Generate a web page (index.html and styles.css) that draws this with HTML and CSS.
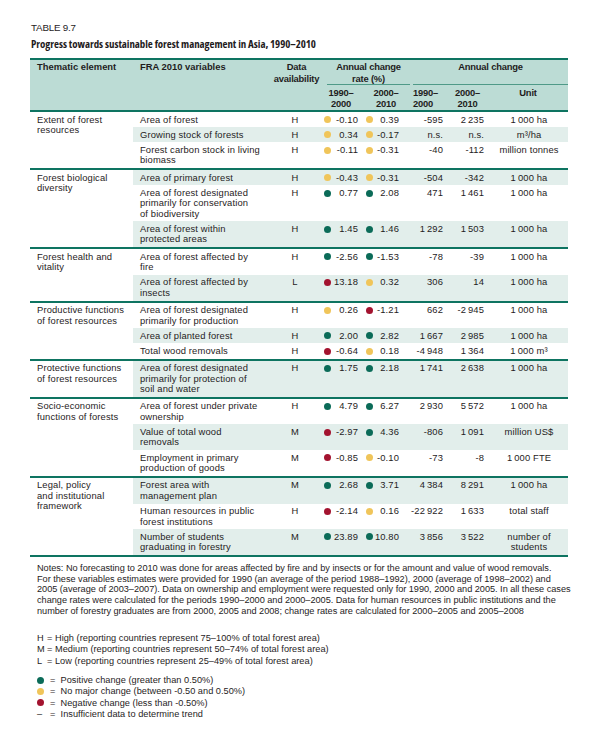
FILE: index.html
```html
<!DOCTYPE html>
<html>
<head>
<meta charset="utf-8">
<title>Table 9.7</title>
<link rel="stylesheet" href="styles.css">
</head>
<body>
<div class="page">
  <div class="label">TABLE 9.7</div>
  <div class="title">Progress towards sustainable forest management in Asia, 1990–2010</div>
  <table class="sfm">
    <colgroup>
      <col class="c1"><col class="c2"><col class="c3"><col class="c4"><col class="c5"><col class="c6"><col class="c7"><col class="c8">
    </colgroup>
    <thead>
      <tr class="h1">
        <th rowspan="2" class="tl">Thematic element</th>
        <th rowspan="2" class="tl">FRA 2010 variables</th>
        <th rowspan="2" class="tc">Data<br>availability</th>
        <th colspan="2" class="grp"><div class="grp-in rate">Annual change<br>rate (%)</div></th>
        <th colspan="3" class="grp"><div class="grp-in ann">Annual change</div></th>
      </tr>
      <tr class="h2">
        <th class="tc">1990–<br>2000</th>
        <th class="tc">2000–<br>2010</th>
        <th class="tl p2">1990–<br>2000</th>
        <th class="tc">2000–<br>2010</th>
        <th class="tc">Unit</th>
      </tr>
    </thead>
    <tbody>
      <tr>
        <td rowspan="3" class="theme">Extent of forest<br>resources</td>
        <td class="var">Area of forest</td><td class="av">H</td>
        <td class="r1"><span class="rt"><i class="dot y"></i>-0.10</span></td>
        <td class="r2"><span class="rt"><i class="dot y"></i>0.39</span></td>
        <td class="n1">-595</td><td class="n2">2&#8201;235</td><td class="unit">1&#8201;000 ha</td>
      </tr>
      <tr class="s">
        <td class="var">Growing stock of forests</td><td class="av">H</td>
        <td class="r1"><span class="rt"><i class="dot y"></i>0.34</span></td>
        <td class="r2"><span class="rt"><i class="dot y"></i>-0.17</span></td>
        <td class="n1">n.s.</td><td class="n2">n.s.</td><td class="unit">m³/ha</td>
      </tr>
      <tr>
        <td class="var">Forest carbon stock in living<br>biomass</td><td class="av">H</td>
        <td class="r1"><span class="rt"><i class="dot y"></i>-0.11</span></td>
        <td class="r2"><span class="rt"><i class="dot y"></i>-0.31</span></td>
        <td class="n1">-40</td><td class="n2">-112</td><td class="unit">million tonnes</td>
      </tr>
    </tbody>
    <tbody>
      <tr class="s">
        <td rowspan="3" class="theme">Forest biological<br>diversity</td>
        <td class="var">Area of primary forest</td><td class="av">H</td>
        <td class="r1"><span class="rt"><i class="dot y"></i>-0.43</span></td>
        <td class="r2"><span class="rt"><i class="dot y"></i>-0.31</span></td>
        <td class="n1">-504</td><td class="n2">-342</td><td class="unit">1&#8201;000 ha</td>
      </tr>
      <tr>
        <td class="var">Area of forest designated<br>primarily for conservation<br>of biodiversity</td><td class="av">H</td>
        <td class="r1"><span class="rt"><i class="dot g"></i>0.77</span></td>
        <td class="r2"><span class="rt"><i class="dot g"></i>2.08</span></td>
        <td class="n1">471</td><td class="n2">1&#8201;461</td><td class="unit">1&#8201;000 ha</td>
      </tr>
      <tr class="s">
        <td class="var">Area of forest within<br>protected areas</td><td class="av">H</td>
        <td class="r1"><span class="rt"><i class="dot g"></i>1.45</span></td>
        <td class="r2"><span class="rt"><i class="dot g"></i>1.46</span></td>
        <td class="n1">1&#8201;292</td><td class="n2">1&#8201;503</td><td class="unit">1&#8201;000 ha</td>
      </tr>
    </tbody>
    <tbody>
      <tr>
        <td rowspan="2" class="theme">Forest health and<br>vitality</td>
        <td class="var">Area of forest affected by<br>fire</td><td class="av">H</td>
        <td class="r1"><span class="rt"><i class="dot g"></i>-2.56</span></td>
        <td class="r2"><span class="rt"><i class="dot g"></i>-1.53</span></td>
        <td class="n1">-78</td><td class="n2">-39</td><td class="unit">1&#8201;000 ha</td>
      </tr>
      <tr class="s">
        <td class="var">Area of forest affected by<br>insects</td><td class="av">L</td>
        <td class="r1"><span class="rt"><i class="dot r"></i>13.18</span></td>
        <td class="r2"><span class="rt"><i class="dot y"></i>0.32</span></td>
        <td class="n1">306</td><td class="n2">14</td><td class="unit">1&#8201;000 ha</td>
      </tr>
    </tbody>
    <tbody>
      <tr>
        <td rowspan="3" class="theme">Productive functions<br>of forest resources</td>
        <td class="var">Area of forest designated<br>primarily for production</td><td class="av">H</td>
        <td class="r1"><span class="rt"><i class="dot y"></i>0.26</span></td>
        <td class="r2"><span class="rt"><i class="dot r"></i>-1.21</span></td>
        <td class="n1">662</td><td class="n2">-2&#8201;945</td><td class="unit">1&#8201;000 ha</td>
      </tr>
      <tr class="s">
        <td class="var">Area of planted forest</td><td class="av">H</td>
        <td class="r1"><span class="rt"><i class="dot g"></i>2.00</span></td>
        <td class="r2"><span class="rt"><i class="dot g"></i>2.82</span></td>
        <td class="n1">1&#8201;667</td><td class="n2">2&#8201;985</td><td class="unit">1&#8201;000 ha</td>
      </tr>
      <tr>
        <td class="var">Total wood removals</td><td class="av">H</td>
        <td class="r1"><span class="rt"><i class="dot r"></i>-0.64</span></td>
        <td class="r2"><span class="rt"><i class="dot y"></i>0.18</span></td>
        <td class="n1">-4&#8201;948</td><td class="n2">1&#8201;364</td><td class="unit">1&#8201;000 m³</td>
      </tr>
    </tbody>
    <tbody>
      <tr class="s">
        <td class="theme">Protective functions<br>of forest resources</td>
        <td class="var">Area of forest designated<br>primarily for protection of<br>soil and water</td><td class="av">H</td>
        <td class="r1"><span class="rt"><i class="dot g"></i>1.75</span></td>
        <td class="r2"><span class="rt"><i class="dot g"></i>2.18</span></td>
        <td class="n1">1&#8201;741</td><td class="n2">2&#8201;638</td><td class="unit">1&#8201;000 ha</td>
      </tr>
    </tbody>
    <tbody>
      <tr>
        <td rowspan="3" class="theme">Socio-economic<br>functions of forests</td>
        <td class="var">Area of forest under private<br>ownership</td><td class="av">H</td>
        <td class="r1"><span class="rt"><i class="dot g"></i>4.79</span></td>
        <td class="r2"><span class="rt"><i class="dot g"></i>6.27</span></td>
        <td class="n1">2&#8201;930</td><td class="n2">5&#8201;572</td><td class="unit">1&#8201;000 ha</td>
      </tr>
      <tr class="s">
        <td class="var">Value of total wood<br>removals</td><td class="av">M</td>
        <td class="r1"><span class="rt"><i class="dot r"></i>-2.97</span></td>
        <td class="r2"><span class="rt"><i class="dot g"></i>4.36</span></td>
        <td class="n1">-806</td><td class="n2">1&#8201;091</td><td class="unit">million US$</td>
      </tr>
      <tr>
        <td class="var">Employment in primary<br>production of goods</td><td class="av">M</td>
        <td class="r1"><span class="rt"><i class="dot r"></i>-0.85</span></td>
        <td class="r2"><span class="rt"><i class="dot y"></i>-0.10</span></td>
        <td class="n1">-73</td><td class="n2">-8</td><td class="unit">1&#8201;000 FTE</td>
      </tr>
    </tbody>
    <tbody>
      <tr class="s">
        <td rowspan="3" class="theme">Legal, policy<br>and institutional<br>framework</td>
        <td class="var">Forest area with<br>management plan</td><td class="av">M</td>
        <td class="r1"><span class="rt"><i class="dot g"></i>2.68</span></td>
        <td class="r2"><span class="rt"><i class="dot g"></i>3.71</span></td>
        <td class="n1">4&#8201;384</td><td class="n2">8&#8201;291</td><td class="unit">1&#8201;000 ha</td>
      </tr>
      <tr>
        <td class="var">Human resources in public<br>forest institutions</td><td class="av">H</td>
        <td class="r1"><span class="rt"><i class="dot r"></i>-2.14</span></td>
        <td class="r2"><span class="rt"><i class="dot y"></i>0.16</span></td>
        <td class="n1">-22&#8201;922</td><td class="n2">1&#8201;633</td><td class="unit">total staff</td>
      </tr>
      <tr class="s">
        <td class="var">Number of students<br>graduating in forestry</td><td class="av">M</td>
        <td class="r1"><span class="rt"><i class="dot g"></i>23.89</span></td>
        <td class="r2"><span class="rt"><i class="dot g"></i>10.80</span></td>
        <td class="n1">3&#8201;856</td><td class="n2">3&#8201;522</td><td class="unit">number of<br>students</td>
      </tr>
    </tbody>
  </table>

  <p class="notes">Notes: No forecasting to 2010 was done for areas affected by fire and by insects or for the amount and value of wood removals.<br>For these variables estimates were provided for 1990 (an average of the period 1988–1992), 2000 (average of 1998–2002) and<br>2005 (average of 2003–2007). Data on ownership and employment were requested only for 1990, 2000 and 2005. In all these cases<br>change rates were calculated for the periods 1990–2000 and 2000–2005. Data for human resources in public institutions and the<br>number of forestry graduates are from 2000, 2005 and 2008; change rates are calculated for 2000–2005 and 2005–2008</p>

  <ul class="legend">
    <li><span class="key">H</span>= High (reporting countries represent 75–100% of total forest area)</li>
    <li><span class="key">M</span>= Medium (reporting countries represent 50–74% of total forest area)</li>
    <li><span class="key">L</span>= Low (reporting countries represent 25–49% of total forest area)</li>
  </ul>
  <ul class="legend dots">
    <li><span class="key"><i class="dot g"></i></span>=&nbsp; Positive change (greater than 0.50%)</li>
    <li><span class="key"><i class="dot y"></i></span>=&nbsp; No major change (between -0.50 and 0.50%)</li>
    <li><span class="key"><i class="dot r"></i></span>=&nbsp; Negative change (less than -0.50%)</li>
    <li><span class="key">–</span>=&nbsp; Insufficient data to determine trend</li>
  </ul>
</div>
</body>
</html>
```

FILE: styles.css
```css
* { box-sizing: border-box; }
html, body { margin: 0; padding: 0; background: #fff; }
body {
  font-family: "Liberation Sans", Arial, sans-serif;
  color: #1f1c1d;
}
.page {
  padding: 22px 0 0 30px;
  width: 600px;
}
.label {
  font-size: 9.8px;
  line-height: 12px;
  letter-spacing: -0.2px;
  padding-left: 1px;
}
.title {
  font-family: "Open Sans", "Liberation Sans", sans-serif;
  font-size: 10.9px;
  line-height: 13px;
  font-weight: 700;
  font-stretch: 80%;
  letter-spacing: -0.05px;
  margin-top: 3px;
  padding-left: 1px;
}
.sfm {
  margin-top: 8px;
  width: 538px;
  table-layout: fixed;
  border-collapse: collapse;
  font-size: 9.4px;
  line-height: 10.5px;
  letter-spacing: 0.13px;
}
.c1 { width: 103px; }
.c2 { width: 139px; }
.c3 { width: 49px; }
.c4 { width: 40px; }
.c5 { width: 50px; }
.c6 { width: 36px; }
.c7 { width: 41px; }
.c8 { width: 80px; }

.sfm thead {
  background: #bcdcd5;
  border-top: 2px solid #0e7461;
  border-bottom: 2px solid #0e7461;
}
.sfm th {
  font-weight: 700;
  vertical-align: top;
  line-height: 12px;
  letter-spacing: -0.2px;
  padding: 1px 0 0;
}
.sfm .h1 th.tl { padding-left: 7px; text-align: left; letter-spacing: 0; }
.sfm th.tc { text-align: center; }
.sfm th.p2 { text-align: left; padding-left: 2px; }
.sfm .h2 th { padding-top: 3px; padding-bottom: 1px; line-height: 10.5px; }
.grp-in {
  height: 24px;
  border-bottom: 1px solid #4f9a88;
  text-align: center;
}
.grp-in.rate { margin: 0 1px 0 6px; }
.grp-in.ann { margin: 0 0 0 2px; }

.sfm tbody { border-top: 2px solid #0e7461; }
.sfm tbody:last-child { border-bottom: 2px solid #0e7461; }
.sfm td {
  vertical-align: top;
  padding: 2.5px 0 2.2px;
}
.sfm tr.s td { background: #e2eeeb; }
.sfm tr.s td.theme, .sfm td.theme { background: #fff; padding-left: 7px; }
.sfm td.var { padding-left: 7px; white-space: nowrap; }
.sfm td.av { text-align: center; padding-right: 3px; }
.sfm td.r1 { padding-left: 2.5px; padding-right: 3px; }
.sfm td.r2 { padding-left: 4.5px; padding-right: 12px; }
.rt {
  display: flex;
  justify-content: space-between;
  align-items: center;
}
.dot {
  display: inline-block;
  width: 7px;
  height: 7px;
  border-radius: 50%;
  flex: none;
}
.dot.g { background: #0b6b58; }
.dot.y { background: #f0c55a; }
.dot.r { background: #a3132f; }
.sfm td.n1, .sfm td.n2 { text-align: right; padding-right: 4px; white-space: nowrap; }
.sfm td.unit { text-align: center; padding-left: 2px; }

.notes {
  margin: 6px 0 0;
  padding-left: 7px;
  font-size: 9.2px;
  line-height: 10.8px;
  letter-spacing: -0.03px;
  white-space: nowrap;
}
.legend {
  list-style: none;
  margin: 16px 0 0;
  padding: 0 0 0 7px;
  font-size: 9.2px;
  line-height: 11.4px;
  letter-spacing: 0.03px;
}
.legend.dots { margin-top: 8px; }
.legend .key {
  display: inline-block;
  width: 10px;
}
.legend.dots .key { width: 13px; }
.legend .dot { vertical-align: -0.5px; }
```
